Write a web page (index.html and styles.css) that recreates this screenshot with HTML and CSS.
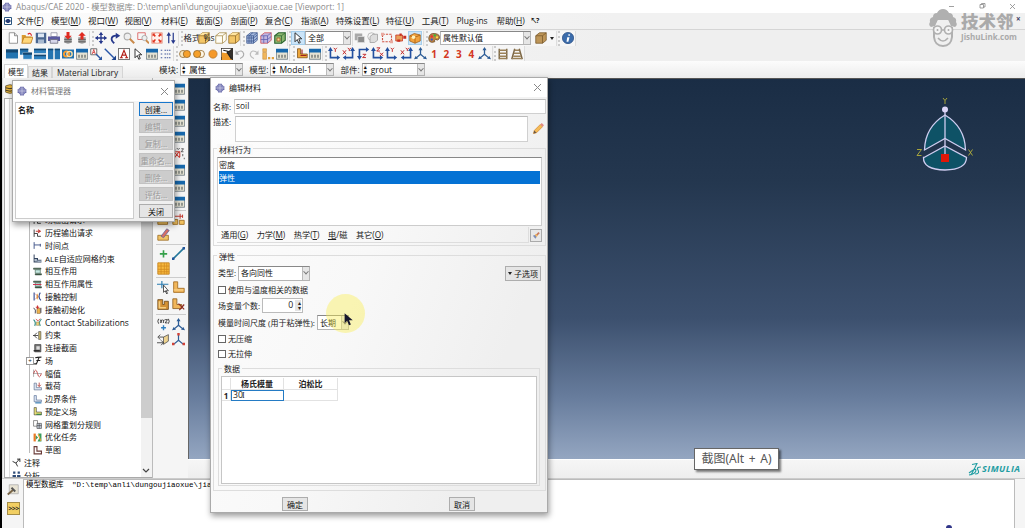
FILE: index.html
```html
<!DOCTYPE html>
<html lang="zh-CN">
<head>
<meta charset="utf-8">
<title>Abaqus/CAE 2020</title>
<link rel="stylesheet" href="styles.css">
</head>
<body>
<svg class="defs" width="0" height="0">
<symbol id="logo" viewBox="0 0 16 16"><g fill="#6668a8"><path d="M5 1h6v4H5zM5 11h6v4H5zM1 5h14v6H1z"/></g><path d="M3 3h10v10H3z" fill="#8587bd"/><path d="M0 8h16M8 0v16" stroke="#d5d6ea" stroke-width="1"/></symbol>
<symbol id="sys" viewBox="0 0 16 16"><path d="M1 1h14v14H1z" fill="#fff" stroke="#2b567f" stroke-width="2"/><path d="M5 4h6v8H5zM3 6h10v4H3z" fill="#243c75"/></symbol>
<symbol id="new" viewBox="0 0 16 16"><path d="M3 1h7l4 4v10H3z" fill="#fff" stroke="#777"/><path d="M10 1v4h4" fill="#ddd" stroke="#777"/></symbol>
<symbol id="open" viewBox="0 0 16 16"><path d="M1 4h5l1 2h7v8H1z" fill="#d99a30"/><path d="M4 7h12l-3 8H1z" fill="#ffd77a" stroke="#b97616"/><path d="M9 3q4-3 5 2" fill="none" stroke="#d22" stroke-width="1.6"/></symbol>
<symbol id="save" viewBox="0 0 16 16"><path d="M1 1h14v14H1z" fill="#4a6690"/><path d="M4 2h8v5H4z" fill="#dce6f3"/><path d="M4 10h8v5H4z" fill="#a9bad0"/></symbol>
<symbol id="print" viewBox="0 0 16 16"><path d="M4 1h8v5H4z" fill="#fff" stroke="#889"/><path d="M0 6h16v6H0z" fill="#5b5aa0"/><path d="M3 10h10v5H3z" fill="#d6d6ea" stroke="#667"/></symbol>
<symbol id="dbdown" viewBox="0 0 16 16"><path d="M3 7h10v7q-5 3-10 0z" fill="#9a9a9a"/><path d="M3 10h10M3 13h10" stroke="#555"/><path d="M6 0h4v5h3L8 10 3 5h3z" fill="#e02a20"/></symbol>
<symbol id="dbup" viewBox="0 0 16 16"><path d="M3 7h10v7q-5 3-10 0z" fill="#9a9a9a"/><path d="M3 10h10M3 13h10" stroke="#555"/><path d="M6 10h4V5h3L8 0 3 5h3z" fill="#e02a20"/></symbol>
<symbol id="move" viewBox="0 0 16 16"><path d="M8 1v14M1 8h14" stroke="#26388c" stroke-width="1.8"/><path d="M8 0l3 4H5zM8 16l3-4H5zM0 8l4-3v6zM16 8l-4-3v6z" fill="#26388c"/></symbol>
<symbol id="rot" viewBox="0 0 16 16"><path d="M7 15C1 10 3 4 11 5" fill="none" stroke="#26388c" stroke-width="2.4"/><path d="M9 1l6 4-6 4z" fill="#26388c"/></symbol>
<symbol id="mag" viewBox="0 0 16 16"><circle cx="6" cy="6" r="4.5" fill="#eee" stroke="#aaa" stroke-width="1.4"/><path d="M9 9l6 6" stroke="#c98a4a" stroke-width="2.5"/></symbol>
<symbol id="magbox" viewBox="0 0 16 16"><path d="M1 1h10v9H1z" fill="none" stroke="#d66" stroke-width="1.2"/><circle cx="10" cy="8" r="3.5" fill="#eee" stroke="#999"/><path d="M12 11l4 4" stroke="#c98a4a" stroke-width="2.4"/></symbol>
<symbol id="fit" viewBox="0 0 16 16"><path d="M1 1h14v14H1z" fill="#fff1ec" stroke="#e58a75"/><path d="M2 2h4L2 6zM14 2v4l-4-4zM2 14v-4l4 4zM14 14h-4l4-4z" fill="#e0301c"/><path d="M3 3l10 10M13 3L3 13" stroke="#e0301c" stroke-width="2" stroke-dasharray="4 6"/></symbol>
<symbol id="updn" viewBox="0 0 16 16"><path d="M5 3v12M11 1v12" stroke="#26388c" stroke-width="1.6"/><path d="M5 0l3 5H2zM11 16l3-5H8z" fill="#26388c"/></symbol>
<symbol id="cubew" viewBox="0 0 16 16"><path d="M1 5l5-4h9v10l-5 4H1z" fill="#fffdf3" stroke="#a58a48"/><path d="M1 5h9v10M10 5l5-4" fill="none" stroke="#a58a48"/></symbol>
<symbol id="cubey" viewBox="0 0 16 16"><path d="M1 5l5-4h9v10l-5 4H1z" fill="#f3c668" stroke="#8d6622"/><path d="M1 5l5-4h9l-5 4z" fill="#ffe5a1"/><path d="M1 5h9v10M10 5l5-4" fill="none" stroke="#8d6622"/></symbol>
<symbol id="cubebr" viewBox="0 0 16 16"><path d="M1 5l5-4h9v10l-5 4H1z" fill="#bd9558" stroke="#77572a"/><path d="M1 5h9v10M10 5l5-4" fill="none" stroke="#77572a"/></symbol>
<symbol id="mesh" viewBox="0 0 16 16"><path d="M1 5l5-4h9v10l-5 4H1z" fill="#a7bbdf" stroke="#38548c"/><path d="M1 5h9v10M10 5l5-4M4 5v10M7 5v10M1 8h9l5-4M1 12h9l5-4M4 5l5-4" fill="none" stroke="#38548c"/></symbol>
<symbol id="meshp" viewBox="0 0 16 16"><path d="M1 5l5-4h9v10l-5 4H1z" fill="#bfb5e0" stroke="#d24a50"/><path d="M1 5h9v10M10 5l5-4M5 5v10M1 10h9l5-4" fill="none" stroke="#5c5cae"/></symbol>
<symbol id="meshg" viewBox="0 0 16 16"><path d="M1 5l5-4h9v10l-5 4H1z" fill="#8cb66f" stroke="#2b6530" stroke-width="1.5"/><path d="M1 5h9v10M10 5l5-4" fill="none" stroke="#2b6530"/><path d="M4 8h4v4H4z" fill="#f1dc92" stroke="#a34f22"/></symbol>
<symbol id="cursor" viewBox="0 0 16 16"><path d="M4 1v12l3-3 2 5 2-1-2-5h4z" fill="#fff" stroke="#222" stroke-width="1.2"/></symbol>
<symbol id="graysq" viewBox="0 0 16 16"><path d="M1 2h10v9H1z" fill="#a9a9a9"/><path d="M5 6h9v8H5z" fill="#8d8d8d" stroke="#ddd"/></symbol>
<symbol id="circsq" viewBox="0 0 16 16"><circle cx="6" cy="6" r="5" fill="none" stroke="#aaa"/><path d="M4 6l4-3h6v8l-4 3H4z" fill="#ddd" stroke="#999"/></symbol>
<symbol id="redbox" viewBox="0 0 16 16"><path d="M2 3h12v10H2z" fill="none" stroke="#cf5140" stroke-width="1.5" stroke-dasharray="3 1.5"/><path d="M0 1h4v4H0zM12 11h4v4h-4z" fill="#e9aaa0"/></symbol>
<symbol id="redmix" viewBox="0 0 16 16"><path d="M1 4h9v8H1z" fill="#e8a05a" stroke="#c62f20"/><path d="M6 2h3v3H6zM11 5h4v4h-4zM3 10h4v3H3z" fill="#c62f20"/></symbol>
<symbol id="obox" viewBox="0 0 16 16"><path d="M1 5l6-3 8 2v8l-7 3-7-3z" fill="#f2a23c" stroke="#a05b14"/><path d="M1 5l7 2 7-3M8 7v8" fill="none" stroke="#a05b14"/><circle cx="6" cy="7" r="2.4" fill="#fff1bb"/></symbol>
<symbol id="palette" viewBox="0 0 16 16"><path d="M1 8q1-7 8-6 8 1 6 7-2 3-5 1-2 0-1 3-8 3-8-5z" fill="#b98243" stroke="#6c4a22"/><circle cx="5" cy="6" r="1.7" fill="#e33"/><circle cx="9" cy="4.500" r="1.500" fill="#3b3"/><circle cx="12" cy="7" r="1.500" fill="#fd4"/><circle cx="5" cy="10" r="1.500" fill="#35c"/></symbol>
<symbol id="info" viewBox="0 0 16 16"><circle cx="8" cy="8" r="7.500" fill="#3b6cab" stroke="#2a4f85"/><path d="M7 7h3l-1.500 6H6M8.500 3h2v2h-2z" fill="#fff"/></symbol>
<symbol id="v1" viewBox="0 0 16 16"><path d="M0 2h16v12H0z" fill="#2474b0"/><path d="M0 2h16v4H0z" fill="#15466f"/></symbol>
<symbol id="v2" viewBox="0 0 16 16"><path d="M0 1h11v8H0z" fill="#2474b0"/><path d="M0 1h11v2H0z" fill="#15466f"/><path d="M4 6h12v9H4z" fill="#2f82bf" stroke="#fff" stroke-width=".7"/><path d="M4 6h12v3H4z" fill="#15466f"/></symbol>
<symbol id="v3" viewBox="0 0 16 16"><path d="M0 1h16v6H0zM0 9h16v6H0z" fill="#2f82bf"/><path d="M0 1h16v2H0zM0 9h16v2H0z" fill="#15466f"/></symbol>
<symbol id="v4" viewBox="0 0 16 16"><path d="M0 1h7v14H0zM9 1h7v14H9z" fill="#2474b0"/><path d="M0 1h7v2H0zM9 1h7v2H9z" fill="#15466f"/></symbol>
<symbol id="link" viewBox="0 0 16 16"><path d="M0 2h16v12H0z" fill="#2474b0"/><circle cx="6" cy="8" r="3.500" fill="none" stroke="#ff9c2a" stroke-width="2.400"/><circle cx="10" cy="8" r="3.500" fill="none" stroke="#ffe0a0" stroke-width="1.800"/></symbol>
<symbol id="mgr" viewBox="0 0 16 16"><path d="M.5 2h15v13H.5z" fill="#e6e3d3" stroke="#5e6d77"/><path d="M0 1h16v5H0z" fill="#1768ac"/><path d="M3 9h2v4H3zM7 9h2v4H7zM11 9h2v4h-2z" fill="#777d79"/></symbol>
<symbol id="abox" viewBox="0 0 16 16"><path d="M1 1h8v8H1z" fill="#fff" stroke="#444"/><path d="M3 8l2-6 2 6M4 6h2" stroke="#c22" fill="none"/><path d="M8 8l7 7" stroke="#2b55a0" stroke-width="1.800"/><path d="M16 16v-5l-5 5z" fill="#2b55a0"/></symbol>
<symbol id="arr" viewBox="0 0 16 16"><path d="M1 1l12 12" stroke="#2755a7" stroke-width="1.800"/><path d="M16 16v-6l-6 6z" fill="#1d438c"/></symbol>
<symbol id="bigA" viewBox="0 0 16 16"><path d="M.5.5h15v15H.5z" fill="#fff" stroke="#333"/><path d="M4 13L8 3l4 10M5.500 9.500h5M2.500 13h4M9.500 13h4" stroke="#b3201a" stroke-width="1.500" fill="none"/></symbol>
<symbol id="list" viewBox="0 0 16 16"><path d="M1 3h3M1 8h3M1 13h3M6 3h9M6 8h9M6 13h9" stroke="#445a9c" stroke-width="1.500" stroke-dasharray="2 1"/></symbol>
<symbol id="c1" viewBox="0 0 16 16"><circle cx="5.500" cy="8" r="4.800" fill="#f4e5c2" stroke="#8e6122"/><circle cx="10.500" cy="8" r="4.800" fill="#f5a02c" stroke="#8e6122"/></symbol>
<symbol id="c2" viewBox="0 0 16 16"><circle cx="10.500" cy="8" r="4.800" fill="#fff7e6" stroke="#8e6122"/><circle cx="5.500" cy="8" r="4.800" fill="#f5a02c" stroke="#8e6122"/></symbol>
<symbol id="c3" viewBox="0 0 16 16"><circle cx="8" cy="8" r="5.500" fill="#f5992a" stroke="#b37a34"/></symbol>
<symbol id="cut" viewBox="0 0 16 16"><path d="M0 0h16v16H0z" fill="#35312c"/><path d="M1 1h13L1 12z" fill="#fff"/><path d="M1 6l7 1 7 9H1z" fill="#ef9b2b"/><path d="M3 3l9 2M8 5l6 10" stroke="#222" stroke-width="1.600"/></symbol>
<symbol id="undo" viewBox="0 0 16 16"><path d="M4 6q7-5 9 2 0 4-5 6" fill="none" stroke="#aaa" stroke-width="1.500"/><path d="M2 3v6h5z" fill="#aaa"/></symbol>
<symbol id="redo" viewBox="0 0 16 16"><path d="M12 6Q5 1 3 8q0 4 5 6" fill="none" stroke="#bbb" stroke-width="1.500"/><path d="M14 3v6H9z" fill="#bbb"/></symbol>
<symbol id="part" viewBox="0 0 16 16"><path d="M2 1h5v8h8v5H2z" fill="#f1b65a" stroke="#a0691d"/><path d="M2 11h12" stroke="#ffe0a0"/></symbol>
<symbol id="blocks" viewBox="0 0 16 16"><path d="M1 1h5v4H1zM1 6h5v9H1z" fill="#f1b65a" stroke="#c48632" stroke-width=".7"/><path d="M8 12h3v3H8zM13 12h3v3h-3z" fill="#e1a03d"/></symbol>
<symbol id="pbox" viewBox="0 0 16 16"><path d="M1 8h12v6H1z" fill="#f3c35f" stroke="#9b6a20"/><path d="M3 5h7v4H3z" fill="#ffe29a" stroke="#9b6a20"/></symbol>
<symbol id="partcut" viewBox="0 0 16 16"><path d="M1 1h5v7h6v5H1z" fill="#f1b65a" stroke="#8b5c1d"/><path d="M8 7l7 7M15 8l-6 7" stroke="#8c2c24" stroke-width="1.500"/></symbol>
<symbol id="partred" viewBox="0 0 16 16"><path d="M2 1h4v7h9v5H2z" fill="#eda63a" stroke="#7d4d12"/><path d="M8 2v6M6 10h8" stroke="#a02020" stroke-width="1.500"/></symbol>
<symbol id="partdn" viewBox="0 0 16 16"><path d="M1 8h6v6H1zM9 9h6v5H9z" fill="#f3c35f" stroke="#9b6a20"/><path d="M2 1v6M2 4h11M10 1v6M13 2v4" stroke="#c2382c" stroke-width="1.200"/></symbol>
<symbol id="solid" viewBox="0 0 16 16"><path d="M1 2h6v6h2V4h5v10H1z" fill="#d39134" stroke="#6d4818"/><path d="M3 4v8h8" fill="none" stroke="#f6cf82" stroke-width="2"/></symbol>
<symbol id="xy" viewBox="0 0 16 16"><path d="M3 3v10h9" fill="none" stroke="#2350a0" stroke-width="2"/><path d="M3 0l3 5H0zM15 13l-4-3v6z" fill="#2350a0"/><path d="M7 1l2 2 2-2M9 3v3" fill="none" stroke="#c22a2a" stroke-width="1.200"/></symbol>
<symbol id="xyr" viewBox="0 0 16 16"><path d="M13 3v10H4" fill="none" stroke="#2350a0" stroke-width="2"/><path d="M13 0l3 5h-6zM1 13l4-3v6z" fill="#2350a0"/><path d="M1 4l4 5M5 4L1 9M7 1l2 2 2-2M9 3v2" fill="none" stroke="#c22a2a" stroke-width="1.200"/></symbol>
<symbol id="xz" viewBox="0 0 16 16"><path d="M3 13V3h9" fill="none" stroke="#2350a0" stroke-width="2"/><path d="M15 3l-4-3v6zM3 16l3-5H0z" fill="#2350a0"/><path d="M7 9h4l-4 4h4" fill="none" stroke="#c22a2a" stroke-width="1.200"/></symbol>
<symbol id="zx" viewBox="0 0 16 16"><path d="M3 3v10h9" fill="none" stroke="#2350a0" stroke-width="2"/><path d="M3 0l3 5H0zM15 13l-4-3v6z" fill="#2350a0"/><path d="M7 1h4L7 5h4M11 7l4 4M15 7l-4 4" fill="none" stroke="#c22a2a" stroke-width="1.200"/></symbol>
<symbol id="tri" viewBox="0 0 16 16"><path d="M8 2v7M8 9l-6 5M8 9l6 5" fill="none" stroke="#2c5c96" stroke-width="1.600"/><path d="M8 0l2.500 4h-5zM0 15l2-4 3 3zM16 15l-2-4-3 3z" fill="#2c5c96"/></symbol>
<symbol id="trir" viewBox="0 0 16 16"><path d="M8 2v7M8 9l-6 5M8 9l6 5" fill="none" stroke="#2c5c96" stroke-width="1.500"/><path d="M6.500 0h3v3h-3zM0 12h3v3H0zM13 12h3v3h-3z" fill="#d34236"/></symbol>
<symbol id="ladder" viewBox="0 0 16 16"><path d="M3 1v14M13 1v14" stroke="#7d6847" stroke-width="2"/><path d="M3 3h10M3 7h10M3 11h10M3 14h10" stroke="#9b8258" stroke-width="1.800"/></symbol>
<symbol id="ladder2" viewBox="0 0 16 16"><path d="M5 1L1 15M11 1l4 14" stroke="#7d6847" stroke-width="2"/><path d="M5 3h6M4 7h8M3 11h10M2 14h12" stroke="#9b8258" stroke-width="1.800"/></symbol>
<symbol id="db" viewBox="0 0 16 16"><path d="M1 3q7-4 14 0v10q-7 4-14 0z" fill="#e8b63d" stroke="#3a3222"/><path d="M1 6q7 3 14 0M1 10q7 3 14 0" stroke="#3a3222" fill="none" stroke-width="1.500"/></symbol>
<symbol id="xyzr" viewBox="0 0 16 16"><path d="M1 5l8 8M8 5l-6 8M3 5h6v7" stroke="#d1392f" stroke-width="1.400" fill="none"/><path d="M1 0l2 3M5 0l2 2 2-2M11 1h3l-3 4h3M13 8v3M15 13v2" stroke="#333" fill="none"/></symbol>
<symbol id="plus" viewBox="0 0 16 16"><path d="M8 4v9M3.500 8.500h9" stroke="#35a04a" stroke-width="2"/></symbol>
<symbol id="line" viewBox="0 0 16 16"><path d="M1 15L15 1" stroke="#24789a" stroke-width="2"/><path d="M0 13h3v3H0zM13 0h3v3h-3z" fill="#22559a"/></symbol>
<symbol id="grid" viewBox="0 0 16 16"><path d="M1 1h14v14H1z" fill="#f7b93f" stroke="#c07c17"/><path d="M1 5h14M1 9h14M1 12h14M5 1v14M9 1v14M12 1v14" stroke="#d38a20"/></symbol>
<symbol id="axcur" viewBox="0 0 16 16"><path d="M0 4h14M6 0v9" stroke="#287bb0" stroke-width="1.400"/><path d="M8 5v9l2-2 2 4 1-1-2-3h3z" fill="#fff" stroke="#333"/></symbol>
<symbol id="xyzb" viewBox="0 0 16 16"><path d="M2 1Q0 4 2 7M14 1q2 3 0 6M4 2l2 4M6 2L4 6M7 2l1 2 1-2M8 4v2M10 2h3l-3 4h3" fill="none" stroke="#222"/><path d="M8 9v6M5 12h6" stroke="#2d7fc0" stroke-width="1.700"/></symbol>
<symbol id="planes" viewBox="0 0 16 16"><path d="M8 5l6-3v8l-6 4z" fill="#edd28e" stroke="#555"/><path d="M2 5h6M0 12h8M4 2L1 5l3 3M5 9l3 3-3 3" fill="none" stroke="#333"/></symbol>
<symbol id="edit" viewBox="0 0 16 16"><path d="M1 9h13v6H1z" fill="#f0c366" stroke="#9b6a20"/><path d="M5 10L12 1l3 2-7 9z" fill="#d66e65" stroke="#669"/></symbol>
<symbol id="step" viewBox="0 0 16 16"><path d="M2 1v13M2 8h6v5h6" fill="none" stroke="#333" stroke-width="1.600"/><path d="M5 4h9M9 1l4 3-4 3" fill="none" stroke="#c33d35" stroke-width="1.800"/></symbol>
<symbol id="time" viewBox="0 0 16 16"><path d="M2 2v12M2 7h12M13 5v5" fill="none" stroke="#44578c" stroke-width="1.700"/></symbol>
<symbol id="ale" viewBox="0 0 16 16"><path d="M2 1v13h13M2 8h6v3h7" fill="none" stroke="#34455f" stroke-width="1.800"/><path d="M4 9h3v4H4zM8 12h6v2H8z" fill="#9dadc2"/></symbol>
<symbol id="inter" viewBox="0 0 16 16"><path d="M1 2h13v2H1zM4 12h11v2H4z" fill="#4b6d52" stroke="#283a30"/><path d="M4 5h9v6H4z" fill="#c6e8e2" stroke="#354"/></symbol>
<symbol id="interp" viewBox="0 0 16 16"><path d="M1 2h13v2H1zM4 12h11v2H4z" fill="#4b6d52" stroke="#283a30"/><path d="M4 5h9v6H4z" fill="#c6e8e2" stroke="#354"/><path d="M0 8h15" stroke="#c24" stroke-width="1.600"/></symbol>
<symbol id="ctrl" viewBox="0 0 16 16"><path d="M2 1v14M13 1q-5 7 1 14" stroke="#334d94" stroke-width="2" fill="none"/><path d="M9 2q-6 6 0 12z" fill="#efb44e"/><path d="M4 3l5 5-5 5" fill="none" stroke="#b33"/></symbol>
<symbol id="init" viewBox="0 0 16 16"><path d="M7 6h6v9H7z" fill="#efb44e" stroke="#863"/><path d="M1 5q5 3 3 10M14 5v9" stroke="#445" stroke-width="1.700" fill="none"/><path d="M8 1v6M5 4h6" stroke="#c33" stroke-width="2"/></symbol>
<symbol id="stab" viewBox="0 0 16 16"><path d="M1 3q5 5 2 11M15 2q-6 5-2 12" stroke="#2d8c83" stroke-width="2" fill="none"/><path d="M6 7h5v6H6z" fill="#f4d176" stroke="#886"/><path d="M5 2l4 3 4-4" stroke="#d44" stroke-width="1.500" fill="none"/></symbol>
<symbol id="constr" viewBox="0 0 16 16"><path d="M0 8h9M7 3L2 8l5 5" stroke="#333" stroke-width="1.500" fill="none"/><path d="M10 1h4v14h-4z" fill="#c9b66a" stroke="#444"/></symbol>
<symbol id="conn" viewBox="0 0 16 16"><path d="M3 1h11v13H3z" fill="#777" stroke="#222"/><path d="M6 4h6v6H6z" fill="#ddd"/><path d="M1 12h11" stroke="#222" stroke-width="2"/></symbol>
<symbol id="field" viewBox="0 0 16 16"><path d="M4 3q3-1 11-1M11 2L6 14H2M6 8h7" fill="none" stroke="#222" stroke-width="2"/></symbol>
<symbol id="amp" viewBox="0 0 16 16"><path d="M1 1v13M0 8h15" stroke="#777"/><path d="M1 8q4-12 7 0t7 0" fill="none" stroke="#c34848" stroke-width="1.600"/></symbol>
<symbol id="load" viewBox="0 0 16 16"><path d="M2 2v12h13v-4H6V2z" fill="#dfe7f3" stroke="#44597c"/><path d="M11 1v7M8 5l3 3 3-3" stroke="#b33b35" stroke-width="1.500" fill="none"/></symbol>
<symbol id="bc" viewBox="0 0 16 16"><path d="M2 1h4v8h9v3H2z" fill="#dce6f5" stroke="#405a84"/><path d="M4 14h11" stroke="#2c76b0" stroke-width="2"/></symbol>
<symbol id="pre" viewBox="0 0 16 16"><path d="M2 1h4v8h9v5H2z" fill="#e9df76" stroke="#333"/><path d="M6 13h9" stroke="#2e8344" stroke-width="2"/></symbol>
<symbol id="remesh" viewBox="0 0 16 16"><path d="M1 1h7v10H1z" fill="#fff" stroke="#444"/><path d="M7 6h8v9H7z" fill="#c8d0dc" stroke="#333"/><path d="M7 10h8M11 6v9" stroke="#333"/></symbol>
<symbol id="opt" viewBox="0 0 16 16"><path d="M1 1h4v14H1z" fill="#ec7a26"/><path d="M5 4l4 4-4 4zM15 1H9l3 6-4 8h7z" fill="#3b9c5e"/><path d="M9 2l5 12" stroke="#e8a432" stroke-width="2"/></symbol>
<symbol id="sketch" viewBox="0 0 16 16"><path d="M2 1h5v8h8v5H2z" fill="#fff" stroke="#6a3b38" stroke-width="2"/></symbol>
<symbol id="note" viewBox="0 0 16 16"><path d="M1 6l6 3 3 6M7 9l7-8M9 2h5v5" fill="none" stroke="#222" stroke-width="1.600"/></symbol>
<symbol id="ana" viewBox="0 0 16 16"><path d="M2 1h4v4H2zM10 1h4v4h-4zM1 7h6v8H1zM9 7h6v8H9z" fill="#2d4b78"/></symbol>
<symbol id="pencil" viewBox="0 0 16 16"><path d="M3 10L11 2l3 3-8 8-4 1z" fill="#f5bb57" stroke="#d28b36"/><path d="M11 2l2-2 3 3-2 2z" fill="#e28b83"/><path d="M2 14l1-4 3 3z" fill="#6b5846"/></symbol>
<symbol id="eraser" viewBox="0 0 16 16"><path d="M6 9l6-6 2 2-6 6z" fill="#c9795c"/><path d="M3 9l3-1 3 3-2 3z" fill="#7e8eb6"/><path d="M7 7l3 3" stroke="#f6c55e" stroke-width="2"/></symbol>
<symbol id="ham" viewBox="0 0 16 16"><path d="M3 1h12v12H3z" fill="#e8e3d3" stroke="#aaa"/><path d="M1 14l7-6" stroke="#786344" stroke-width="2.500"/><path d="M6 5l5 5" stroke="#555" stroke-width="2.500"/></symbol>
<symbol id="ptr" viewBox="0 0 16 20"><path d="M1 0v16l4-4 3 7 3-1-3-7h6z" fill="#17172d"/></symbol>
</svg>

<div class="app">
  <header class="title">
    <svg class="i10"><use href="#logo"/></svg>
    <span class="title-text">Abaqus/CAE 2020 - 模型数据库: D:\temp\anli\dungoujiaoxue\jiaoxue.cae [Viewport: 1]</span>
    <svg class="winbtns" viewBox="0 0 70 10"><path d="M1 5.500h5M32 3.500h3.500v3.500H32zM33.500 3.500v-1H37v3.500h-1.500M62 3l5 5M67 3l-5 5" fill="none" stroke="#888" stroke-width=".8"/></svg>
  </header>
  <nav class="menu">
    <svg class="i8"><use href="#sys"/></svg>
    <div class="m1">文件(<u>F</u>)</div><div class="m2">模型(<u>M</u>)</div><div class="m3">视口(<u>W</u>)</div><div class="m3">视图(<u>V</u>)</div><div class="m4">材料(<u>E</u>)</div><div class="m4">截面(<u>S</u>)</div><div class="m4">剖面(<u>P</u>)</div><div class="m5">复合(<u>C</u>)</div><div class="m4">指派(<u>A</u>)</div><div class="m6">特殊设置(<u>L</u>)</div><div class="m5">特征(<u>U</u>)</div><div class="m4">工具(<u>T</u>)</div><div class="m7">Plug-ins</div><div class="m4">帮助(<u>H</u>)</div><b class="q">↖?</b>
  </nav>
  <div class="bar">
    <div class="g ga"><svg><use href="#new"/></svg><svg><use href="#open"/></svg><svg><use href="#save"/></svg><svg><use href="#print"/></svg><svg><use href="#dbdown"/></svg><svg><use href="#dbup"/></svg></div>
    <div class="g gb"><svg><use href="#move"/></svg><svg><use href="#rot"/></svg><svg><use href="#mag"/></svg><svg><use href="#magbox"/></svg><svg><use href="#fit"/></svg><svg><use href="#updn"/></svg></div>
    <div class="g gc"><span class="fmt">格式<svg class="fi"><use href="#cubey"/></svg>%s</span><svg><use href="#cubew"/></svg><svg><use href="#cubey"/></svg></div>
    <div class="g gd"><svg><use href="#mesh"/></svg><svg><use href="#meshp"/></svg><svg><use href="#meshg"/></svg></div>
    <div class="g ge"><span class="hl"><svg><use href="#cursor"/></svg></span><span class="sel s46">全部<i></i></span></div>
    <div class="g gf"><svg><use href="#graysq"/></svg><svg><use href="#circsq"/></svg><svg><use href="#redbox"/></svg><svg><use href="#redmix"/></svg><span class="hl"><svg><use href="#obox"/></svg></span></div>
    <div class="g gg"><svg><use href="#palette"/></svg><span class="sel s91">属性默认值<i></i></span><svg class="cb"><use href="#cubebr"/></svg><b class="dn"></b></div>
    <div class="g gh"><svg><use href="#info"/></svg></div>
  </div>
  <div class="bar bar2">
    <div class="g ha"><svg><use href="#v1"/></svg><svg><use href="#v2"/></svg><svg><use href="#v3"/></svg><svg><use href="#v4"/></svg><svg><use href="#link"/></svg><svg><use href="#mgr"/></svg><svg><use href="#abox"/></svg><svg><use href="#arr"/></svg><svg><use href="#bigA"/></svg><svg><use href="#cursor"/></svg><svg><use href="#mgr"/></svg><svg><use href="#list"/></svg></div>
    <div class="g hb"><svg><use href="#c1"/></svg><svg><use href="#c2"/></svg><svg><use href="#c3"/></svg><svg><use href="#cut"/></svg><svg><use href="#undo"/></svg><svg><use href="#redo"/></svg><svg><use href="#blocks"/></svg><svg><use href="#mgr"/></svg></div>
    <div class="g hc"><svg><use href="#partred"/></svg><svg><use href="#mgr"/></svg></div>
    <div class="g hd"><svg><use href="#xy"/></svg><svg><use href="#xyr"/></svg><svg><use href="#xz"/></svg><svg><use href="#zx"/></svg><svg><use href="#xy"/></svg><svg><use href="#xyr"/></svg><svg><use href="#tri"/></svg><b>1</b><b>2</b><b>3</b><b>4</b><svg><use href="#tri"/></svg></div>
    <div class="g he"><svg><use href="#ladder"/></svg><svg><use href="#ladder2"/></svg></div>
  </div>
  <div class="ctx">
    <div class="tabs"><span class="on">模型</span><span>结果</span><span class="wide">Material Library</span></div>
    <label class="c1">模块:<span class="sel spin s63">属性<i></i></span></label>
    <label class="c2">模型:<span class="sel spin s64">Model-1<i></i></span></label>
    <label class="c3">部件:<span class="sel spin s62">grout<i></i></span></label>
  </div>
  <main class="main">
    <aside class="side">
      <div class="sidebar-head"><svg class="i10"><use href="#db"/></svg></div>
      <div class="treebox">
        <div class="tree">
          <ul>
            <li><svg><use href="#step"/></svg>场输出请求</li>
            <li><svg><use href="#step"/></svg>历程输出请求</li>
            <li><svg><use href="#time"/></svg>时间点</li>
            <li><svg><use href="#ale"/></svg>ALE自适应网格约束</li>
            <li><svg><use href="#inter"/></svg>相互作用</li>
            <li><svg><use href="#interp"/></svg>相互作用属性</li>
            <li><svg><use href="#ctrl"/></svg>接触控制</li>
            <li><svg><use href="#init"/></svg>接触初始化</li>
            <li class="en"><svg><use href="#stab"/></svg>Contact Stabilizations</li>
            <li><svg><use href="#constr"/></svg>约束</li>
            <li><svg><use href="#conn"/></svg>连接截面</li>
            <li class="ex"><svg><use href="#field"/></svg>场</li>
            <li><svg><use href="#amp"/></svg>幅值</li>
            <li><svg><use href="#load"/></svg>载荷</li>
            <li><svg><use href="#bc"/></svg>边界条件</li>
            <li><svg><use href="#pre"/></svg>预定义场</li>
            <li><svg><use href="#remesh"/></svg>网格重划分规则</li>
            <li><svg><use href="#opt"/></svg>优化任务</li>
            <li><svg><use href="#sketch"/></svg>草图</li>
            <li class="top"><svg><use href="#note"/></svg>注释</li>
            <li class="top"><svg><use href="#ana"/></svg>分析</li>
          </ul>
        </div>
        <div class="scroll"><div class="thumb"></div><svg viewBox="0 0 10 10"><path d="M2 3l3 3 3-3" fill="none" stroke="#444" stroke-width="1.200"/></svg></div>
      </div>
    </aside>
    <section class="tools">
      <div class="mgrs"><svg><use href="#mgr"/></svg><svg><use href="#mgr"/></svg><svg><use href="#mgr"/></svg><svg><use href="#mgr"/></svg><svg><use href="#xyzr"/></svg><svg><use href="#mgr"/></svg><svg><use href="#mgr"/></svg><svg><use href="#mgr"/></svg></div>
      <div class="tg"><svg><use href="#pbox"/></svg><svg><use href="#partdn"/></svg><svg><use href="#edit"/></svg></div>
      <div class="tg"><svg><use href="#plus"/></svg><svg><use href="#line"/></svg><svg><use href="#grid"/></svg></div>
      <div class="tg tall"><svg><use href="#axcur"/></svg><svg><use href="#part"/></svg><svg><use href="#solid"/></svg><svg><use href="#partcut"/></svg></div>
      <div class="tg last"><svg><use href="#xyzb"/></svg><svg><use href="#tri"/></svg><svg><use href="#planes"/></svg><svg><use href="#trir"/></svg></div>
    </section>
    <section class="view">
      <div class="canvas">
        <svg class="compass" viewBox="0 0 64 80"><g fill="#0e5266" stroke="#cfcdf0" stroke-width="1.300"><path d="M32 18Q12 30 11.500 53L32 41.500 52.500 53Q52 30 32 18z"/><path d="M11 60.500L32 49l21.500 11.500q0 12-21.500 12.500-22-.5-21.500-12.500z"/><path d="M32 12v46"/></g><circle cx="32" cy="12.500" r="3" fill="#dcd6f8"/><path d="M28 57h8v8h-8z" fill="#e01708"/><path d="M30 1l2 2.500L34 1M32 3.500V7M4 52.500h4.500l-4.500 6h4.500M55.500 52.500l4 6M59.500 52.500l-4 6" fill="none" stroke="#b5b13b" stroke-width=".9"/></svg>
      </div>
      <div class="status"><svg class="simulia" viewBox="0 0 14 13"><path d="M4 1.500l5-1-2 4-4 7.500M1 10q6-5 7-3 0 4-7 5M13 4q-5 0-3 3 2 4-3 4" fill="none" stroke="#1f9da2" stroke-width="1.100"/></svg><span>SIMULIA</span></div>
    </section>
  </main>
  <footer class="foot">
    <div class="fbtns"><svg><use href="#ham"/></svg><b>&gt;&gt;&gt;</b></div>
    <div class="log">模型数据库 "D:\temp\anli\dungoujiaoxue\jiaoxue.cae" 已打开.</div>
  </footer>

  <section class="win manager">
    <header><svg class="i10"><use href="#logo"/></svg><span>材料管理器</span><em></em></header>
    <div class="mbody"><div class="names">名称</div>
      <div class="btns"><button class="btn def">创建...</button><button class="btn off">编辑...</button><button class="btn off">复制...</button><button class="btn off">重命名...</button><button class="btn off">删除...</button><button class="btn off">评估...</button><button class="btn">关闭</button></div>
    </div>
  </section>

  <section class="win editor">
    <header><svg class="i10"><use href="#logo"/></svg><span>编辑材料</span><em></em></header>
    <div class="row name"><span>名称:</span><div class="field">soil</div></div>
    <div class="row desc"><span>描述:</span><div class="field"></div><svg><use href="#pencil"/></svg></div>
    <fieldset class="beh"><legend>材料行为</legend>
      <div class="blist"><div>密度</div><div class="picked">弹性</div></div>
      <div class="bmenu"><div class="bm"><span>通用(<u>G</u>)</span><span>力学(<u>M</u>)</span><span>热学(<u>T</u>)</span><span><u>电</u>/磁</span><span>其它(<u>O</u>)</span></div><div class="er"><svg><use href="#eraser"/></svg></div></div>
    </fieldset>
    <fieldset class="ela"><legend>弹性</legend>
      <div class="row r1"><span>类型:</span><span class="sel s71">各向同性<i></i></span><button class="btn sub"><b class="dn"></b>子选项</button></div>
      <div class="row r2"><i class="chk"></i>使用与温度相关的数据</div>
      <div class="row r3"><span>场变量个数:</span><div class="num">0<i></i></div></div>
      <div class="row r4"><span>模量时间尺度 (用于粘弹性):</span><span class="sel s32">长期<i></i></span></div>
      <div class="row r5"><i class="chk"></i>无压缩</div>
      <div class="row r6"><i class="chk"></i>无拉伸</div>
      <fieldset class="data"><legend>数据</legend>
        <div class="sheet"><div class="tbl"><b></b><b>杨氏模量</b><b>泊松比</b><b>1</b><span class="cell">30<i>I</i></span><span></span></div></div>
      </fieldset>
    </fieldset>
    <div class="actions"><button class="btn">确定</button><button class="btn">取消</button></div>
  </section>

  <div class="halo"></div>
  <svg class="pointer"><use href="#ptr"/></svg>
  <div class="tip">截图(Alt + A)</div>
  <div class="mark">
    <svg viewBox="0 0 30 40"><path d="M3 19q-3-2-1-5-1-4 3-5 0-4 4-4 2-4 6-4t6 4q4 0 4 4 4 1 3 5 2 3-1 5l-4-1-3-6H10l-3 6z" fill="#b0b0b0"/><path d="M6 19v10q1 9 9 9t9-9V19" fill="#f0f0f0" stroke="#b0b0b0" stroke-width="2"/><path d="M7 19l3-7h10l3 7z" fill="#f0f0f0"/><circle cx="9.500" cy="22" r="4" fill="#f4f4f4" stroke="#b0b0b0" stroke-width="1.700"/><circle cx="20.500" cy="22" r="4" fill="#f4f4f4" stroke="#b0b0b0" stroke-width="1.700"/><path d="M13.500 22h3M10 30q5 6 10 0" fill="none" stroke="#b0b0b0" stroke-width="1.600"/><circle cx="9.500" cy="22" r="1" fill="#aaa"/><circle cx="20.500" cy="22" r="1" fill="#aaa"/></svg>
    <div><strong>技术邻</strong><small>JishuLink.com</small></div>
  </div>
  <div class="mdi">×</div>
  <div class="dot"></div>
</div>
</body>
</html>
```
FILE: styles.css
```css
* { box-sizing: border-box; }
body { margin: 0; width: 1025px; height: 528px; overflow: hidden; font: 8px/12px "Open Sans", "Noto Sans CJK SC", sans-serif; color: #222; background: #f0f0f0; }
.defs { position: absolute; }
svg { display: block; flex: none; }
u { text-underline-offset: 1px; text-decoration-thickness: 1px; }
.app { position: relative; width: 1025px; height: 528px; overflow: hidden; border-left: 2px solid #000; display: flex; flex-direction: column; white-space: nowrap; }
.i10 { width: 10px; height: 10px; }
.i8 { width: 8px; height: 8px; }

.title { height: 13px; background: #fff; display: flex; align-items: center; color: #8b8b8b; font-size: 8.300px; flex: none; }
.title-text { margin-left: 4px; }
.winbtns { width: 70px; height: 10px; margin: -2px 7px 0 auto; }
.menu { height: 17px; display: flex; align-items: center; flex: none; padding: 0 0 1px 2px; border-bottom: 1px solid #d5d5d5; font-size: 8.500px; background: linear-gradient(90deg, #fcfcfc, #f1f1f1 60%); }
.m1 { margin-left: 5px; width: 34px; } .m2 { width: 37px; } .m3 { width: 36.500px; } .m4 { width: 34.700px; } .m5 { width: 36px; } .m6 { width: 50px; } .m7 { width: 40px; }
.q { font-size: 7px; margin-left: -1px; letter-spacing: -1px; }

.bar { height: 16px; display: flex; align-items: center; flex: none; background: linear-gradient(90deg, #f9f9f9, #efefef 60%); }
.g { display: flex; align-items: center; justify-content: space-around; height: 15px; flex: none; background: #f6f6f6; border-right: 1px solid #ddd; }
.g svg { width: 12px; height: 12px; }
.g + .g { border-left: 2px dotted #ccc; }
.ga { width: 84px; margin-left: 4px; } .gb { width: 87px; margin-left: 2px; }
.gc { width: 60px; margin-left: 2px; } .gd { width: 45px; margin-left: 2px; }
.ge { width: 64px; margin-left: 1px; } .gf { width: 71px; }
.gg { width: 131px; margin-left: 2px; } .gh { width: 18px; margin-left: 1px; }
.ge, .gg { justify-content: flex-start; }
.g.gf { border-left: 0; }
.fmt { display: flex; width: 30px; align-items: center; font-size: 8.500px; }
.g .fi { margin: 0 -6px 0 -3px; }
.hl { background: #cbe4f8; border: 1px solid #a4cdeb; width: 14px; height: 14px; display: grid; place-items: center; flex: none; }
.sel { display: flex; align-items: center; height: 14px; background: #fff; border: 1px solid #b4b4b4; border-top-color: #888; padding-left: 2px; position: relative; flex: none; color: #111; }
.sel i { margin-left: auto; height: 100%; width: 7px; background: #e6e6e6; border-left: 1px solid #bbb; display: grid; place-items: center; }
.sel i::after { content: ""; width: 3px; height: 3px; border: solid #777; border-width: 0 1px 1px 0; transform: rotate(45deg) translate(-1px,-1px); }
.s46 { width: 46px; } .s91 { width: 91px; } .s63 { width: 63px; } .s64 { width: 64px; } .s62 { width: 63px; } .s71 { width: 72px; } .s32 { width: 32px; }
.gg .cb { margin-left: 4px; }
.dn { width: 0; height: 0; border: solid transparent; border-width: 3px 2.500px 0; border-top-color: #222; margin-left: 2px; }
.bar2 { height: 15px; }
.g b { color: #d33622; font-size: 10px; width: 11px; text-align: center; }
.g .dn { width: 0; margin-left: 3px; }
.ha { width: 169px; margin-left: 3px; } .hb { width: 114px; margin-left: 2px; } .hc { width: 30px; margin-left: 3px; } .hd { width: 168px; margin-left: 2px; } .he { width: 31px; margin-left: 1px; }
.hd svg { width: 13px; height: 13px; }

.ctx { height: 17px; display: flex; flex: none; background: linear-gradient(#fcfcfc, #ececec); }
.tabs { display: flex; align-items: flex-end; width: 151px; padding-left: 2px; height: 18px; }
.tabs span { background: #ebebeb; border: 1px solid #d5d5d5; border-bottom: 0; padding: 0 3px; height: 13px; width: 24px; }
.tabs .on { background: #fff; height: 15px; padding-top: 1px; }
.tabs .wide { width: 71px; padding: 0 4px; font-size: 8.300px; }
.ctx label { display: flex; align-items: center; gap: 2px; height: 17px; font-size: 8.500px; }
.c1 { margin-left: 6px; } .c2 { margin-left: 6px; } .c3 { margin-left: 6px; }
.spin { padding-left: 8px; height: 13px; }
.spin::before { content: "▴\A▾"; white-space: pre; font: 6px/5px "DejaVu Sans", sans-serif; position: absolute; left: 1px; top: 0; background: #eee; }

.main { height: 400px; display: flex; flex: none; }
.side { width: 151px; background: #f4f4f4; border-left: 1px solid #ddd; display: flex; flex-direction: column; border-right: 1px solid #bbb; }
.sidebar-head { height: 20px; padding: 6px 0 0 2px; flex: none; }
.treebox { flex: 1; display: flex; border: 1px solid #aaa; border-right: 0; background: #fff; overflow: hidden; margin-left: 1px; min-height: 0; }
.tree { flex: 1; padding-top: 115px; overflow: hidden; background: linear-gradient(#bbb, #bbb) 24px 0 / 1px 354px no-repeat, linear-gradient(#ddd, #ddd) 4px 0 / 1px 100% no-repeat; }
.tree ul { margin: 0; padding: 0; list-style: none; }
.tree li { height: 12.780px; display: flex; align-items: center; padding-left: 28px; gap: 3px; font-size: 8px; line-height: 12px; color: #111; position: relative; }
.tree li svg { width: 9px; height: 9px; }
.tree li.top { padding-left: 7px; }
.tree li.en { font-size: 8.400px; }
.tree li.ex::before { content: "+"; position: absolute; left: 21px; top: 3px; width: 6px; height: 6px; border: 1px solid #999; background: #fff; font: 6px/4px "Liberation Sans", sans-serif; text-align: center; }
.scroll { width: 11px; background: #f2f2f2; display: flex; flex-direction: column; justify-content: space-between; flex: none; }
.thumb { height: 319px; background: #cdcdcd; }
.scroll svg { width: 10px; height: 10px; margin-bottom: 1px; }

.tools { width: 35px; padding: 5px 2px 0 3px; background: #f5f5f5; }
.mgrs { height: 128px; display: flex; flex-direction: column; align-items: flex-end; padding: 0 1px 2px 0; justify-content: space-between; border-bottom: 1px solid #ccc; }
.tools svg { width: 13px; height: 13px; }
.mgrs svg { width: 12px; height: 12px; }
.tg { height: 33.500px; display: grid; grid-template-columns: 15px 15px; place-items: center; align-content: space-evenly; border-bottom: 1px solid #ccc; }
.tg.tall { height: 37px; }
.tg.last { border: 0; }

.view { flex: 1; display: flex; flex-direction: column; }
.canvas { height: 381px; background: linear-gradient(#1a2d45, #24374f 27%, #3c506e 63%, #687d9d 84%, #94a6c1); border-left: 1px solid #666; border-top: 1px solid #555; }
.compass { width: 64px; height: 80px; margin: 18px 0 0 724px; }
.status { flex: 1; display: flex; align-items: center; justify-content: flex-end; background: linear-gradient(#f6f6f6, #eee); border-top: 1px solid #fff; color: #1f9da2; font: italic bold 9px/12px "Open Sans", sans-serif; letter-spacing: .5px; }
.simulia { width: 14px; height: 13px; }
.status span { width: 43px; }

.foot { flex: 1; display: flex; border-top: 1px solid #ccc; background: #f5f5f5; padding-left: 1px; }
.fbtns { width: 20px; padding: 5px 0 0 4px; display: flex; flex-direction: column; gap: 6px; }
.fbtns svg { width: 12px; height: 12px; }
.fbtns b { width: 13px; height: 13px; background: #f2cf62; border: 1px solid #a58d47; font-size: 7px; line-height: 11px; letter-spacing: -.5px; text-align: center; }
.log { width: 992px; background: #fff; border: solid #bbb; border-width: 1px 1px 0 1px; padding-left: 2px; font: 7.500px/11px "Liberation Mono", "Noto Sans CJK SC", monospace; word-spacing: 4px; color: #000; }

.win { position: absolute; background: linear-gradient(110deg, #fdfdfd, #f8f8f8 45%, #efefef 80%); border: 1px solid #aaa; box-shadow: 1px 3px 6px rgba(0,0,0,.4); }
.win header { background: #fff; display: flex; align-items: center; padding: 0 6px 0 4px; gap: 4px; }
.win em { margin-left: auto; width: 7px; height: 7px; background: linear-gradient(45deg, transparent 44%, #888 44% 56%, transparent 56%), linear-gradient(-45deg, transparent 44%, #888 44% 56%, transparent 56%); }
.btn { font: inherit; color: #111; border: 1px solid #adadad; background: #e5e5e5; padding: 0; height: 14px; line-height: 11px; white-space: nowrap; }
.manager { left: 10px; top: 80px; width: 163px; height: 142px; }
.manager header { height: 20px; color: #777; font-size: 8px; }
.mbody { display: flex; padding: 1px 1px 0 2px; justify-content: space-between; }
.names { width: 119px; height: 117px; border: 1px solid #ccc; background: #fff; font-weight: bold; padding: 1px 2px; }
.btns { width: 34px; display: flex; flex-direction: column; gap: 3px; }
.btn.def { border: 1.500px solid #1877cc; }
.btn.off { background: #ccc; border-color: #c2c2c2; color: #999; text-shadow: 1px 1px #eee; }

.editor { left: 208px; top: 77px; width: 338px; height: 436px; }
.editor header { height: 19px; }
.row { display: flex; align-items: center; }
.field { background: #fff; border: 1px solid #d0d0d0; border-top-color: #bbb; font-size: 8.400px; padding-left: 1px; }
.name { height: 19px; padding-left: 2px; }
.name span, .desc span { width: 21px; flex: none; }
.name .field { width: 312px; height: 15px; }
.desc { height: 26px; padding-left: 2px; align-items: flex-start; }
.desc .field { width: 293px; height: 26px; margin-left: 1px; }
.desc svg { width: 12px; height: 12px; margin: 7px 0 0 4px; }
fieldset { margin: 0; padding: 0; border: 1px solid #ddd; min-width: 0; position: relative; }
legend { position: absolute; top: -5px; left: 3px; padding: 0 2px; background: #f9f9f9; line-height: 11px; }
.beh { margin: 6px 1px 0 2px; height: 98px; padding: 8px 3px 0 3px; }
.blist { height: 69px; background: #fff; border: 1px solid #ccc; border-top-color: #888; padding: 0 1px; }
.blist div { height: 13px; line-height: 13px; padding-left: 0; }
.blist .picked { background: #0472d4; color: #fff; }
.bmenu { display: flex; align-items: center; justify-content: space-between; height: 18px; }
.bm { width: 312px; height: 16px; border: solid #ddd; border-width: 0 1px 1px 0; display: flex; gap: 8.500px; align-items: center; padding-left: 4px; font-size: 8.200px; }
.er { width: 12px; height: 13px; border: 1px solid #aaa; background: #e8e8e8; }
.er svg { width: 10px; height: 10px; }
.ela { margin: 9px 1px 0 2px; height: 236px; padding: 8px 5px 0 4px; }
.ela .row { height: 16px; gap: 2px; }
.ela .r1 { height: 18px; }
.sub { margin-left: auto; width: 36px; display: flex; align-items: center; gap: 2px; margin-right: -1px; }
.sel.s71, .sel.s32, .sub { height: 15px; }
.chk { width: 8px; height: 8px; border: 1px solid #666; background: #fff; flex: none; }
.ela .r2 { height: 15px; }
.ela .r3 { height: 17px; }
.num { width: 41px; height: 15px; background: #fff; border: 1px solid #bbb; text-align: right; padding-right: 9px; position: relative; font-size: 8.700px; }
.num i { position: absolute; right: 1px; top: 1px; width: 6px; height: 11px; background: #e4e4e4; }
.num i::before { content: "▴\A▾"; white-space: pre; font: 6px/5px "DejaVu Sans", sans-serif; display: block; }
.ela .r4 { height: 17px; }
.ela .r5 { height: 15px; }
.ela .r6 { height: 15px; }
.data { height: 118px; margin-top: 7px; padding: 7px 2px 0; }
.data legend { top: -6px; }
.sheet { height: 108px; background: #fff; border: 1px solid #c6c6c6; }
.tbl { display: grid; grid-template: 12px 11px / 9px 53px 54px; text-align: center; line-height: 12px; padding-top: 1px; width: 116px; }
.tbl b, .tbl span { border: solid #e2e2e2; border-width: 0 1px 1px 0; }
.tbl .cell { border: 1px solid #247bc4; text-align: left; padding-left: 1px; line-height: 9px; font-size: 8.700px; display: flex; }
.cell i { font: 8px/9px "Liberation Serif", serif; margin-left: -1px; }
.actions { display: flex; padding: 6px 72px 0 71px; justify-content: space-between; }
.actions .btn { width: 26px; }

.halo { position: absolute; left: 324px; top: 294px; width: 39px; height: 39px; border-radius: 50%; background: rgba(250,238,80,.42); }
.pointer { position: absolute; left: 342px; top: 313px; width: 10px; height: 13px; }
.tip { position: absolute; left: 692px; top: 448px; width: 85px; height: 22px; background: #fff; border: 1px solid #666; box-shadow: 2px 2px 2px rgba(0,0,0,.5); font: 12px/19px "Noto Sans", "Noto Sans CJK SC", sans-serif; word-spacing: 1.500px; text-align: center; color: #555; }
.mark { position: absolute; left: 926px; top: 8px; display: flex; color: #aaa; }
.mark svg { width: 30px; height: 40px; }
.mark strong { display: block; font: 900 17.500px/18px "Noto Sans CJK SC", sans-serif; margin: 4px 0 0 3px; }
.mark small { display: block; font: bold 8px/10px "Open Sans", sans-serif; margin: 2px 0 0 3px; }
.mdi { position: absolute; left: 1014px; top: 14px; width: 6px; height: 10px; font-weight: bold; color: #446; line-height: 10px; }
.dot { position: absolute; left: 944px; top: 525px; width: 6px; height: 6px; border-radius: 50%; background: #303588; }
```
